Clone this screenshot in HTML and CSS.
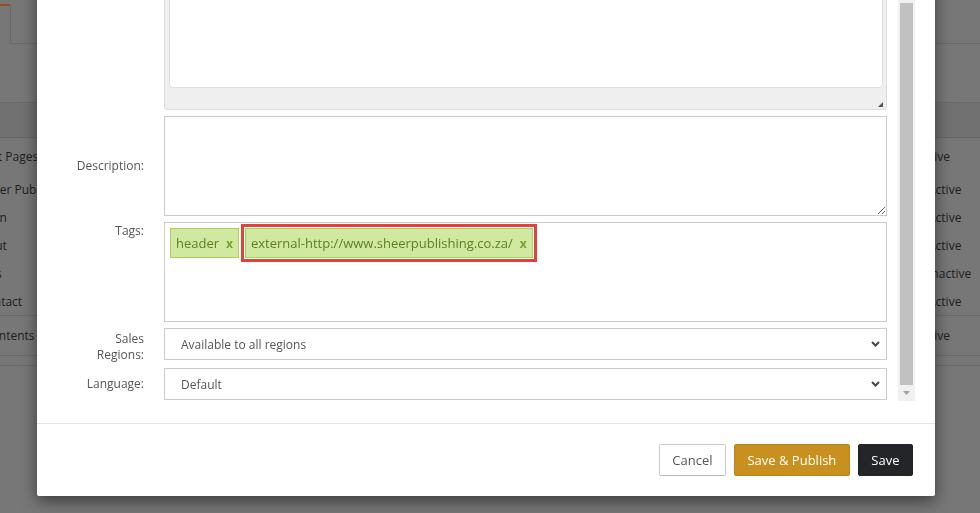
FILE: index.html
```html
<!DOCTYPE html>
<html lang="en">
<head>
<meta charset="utf-8">
<title>Edit Page</title>
<link rel="stylesheet" href="styles.css">
</head>
<body>
<div class="page">
  <div class="tabbar">
    <div class="tab-active"></div>
    <div class="tab"></div>
  </div>
  <div class="table">
    <div class="thead"></div>
    <div class="trow first"><span class="name deep">Root Pages</span><span class="status">Live</span></div>
    <div class="trow"><span class="name">Sheer Publishing</span><span class="status">Active</span></div>
    <div class="trow"><span class="name">Main</span><span class="status">Active</span></div>
    <div class="trow"><span class="name deeper">About</span><span class="status">Active</span></div>
    <div class="trow"><span class="name deeper">Links</span><span class="status">Inactive</span></div>
    <div class="trow"><span class="name">Contact</span><span class="status">Active</span></div>
    <div class="trow section"><span class="name short">Contents</span><span class="status">Live</span></div>
    <div class="rule"></div>
  </div>
</div>

<div class="modal">
  <div class="modal-body">
    <div class="form">
      <div class="form-row gap6">
        <div class="label"></div>
        <div class="field">
          <div class="editor">
            <div class="editor-area"></div>
            <div class="editor-status"><span class="grip"></span></div>
          </div>
        </div>
      </div>
      <div class="form-row gap6">
        <div class="label">Description:</div>
        <div class="field"><textarea class="textarea"></textarea></div>
      </div>
      <div class="form-row gap6 top">
        <div class="label label-top">Tags:</div>
        <div class="field">
          <div class="tags">
            <span class="tag">header<span class="x">x</span></span>
            <span class="tag flagged">external-http://www.sheerpublishing.co.za/<span class="x">x</span></span>
          </div>
        </div>
      </div>
      <div class="form-row gap8">
        <div class="label label-two">Sales Regions:</div>
        <div class="field">
          <div class="select"><span>Available to all regions</span><svg class="chev" width="9" height="6" viewBox="0 0 9 6"><path d="M1 1 L4.5 4.5 L8 1" fill="none" stroke="#444" stroke-width="2"/></svg></div>
        </div>
      </div>
      <div class="form-row">
        <div class="label">Language:</div>
        <div class="field">
          <div class="select"><span>Default</span><svg class="chev" width="9" height="6" viewBox="0 0 9 6"><path d="M1 1 L4.5 4.5 L8 1" fill="none" stroke="#444" stroke-width="2"/></svg></div>
        </div>
      </div>
    </div>
    <div class="scrollbar">
      <div class="track-space"></div>
      <div class="thumb"></div>
      <div class="arrow"><svg width="7" height="4" viewBox="0 0 7 4"><path d="M0 0 L7 0 L3.5 4 Z" fill="#a3a3a3"/></svg></div>
    </div>
  </div>
  <div class="modal-footer">
    <button class="btn btn-cancel">Cancel</button>
    <button class="btn btn-publish">Save &amp; Publish</button>
    <button class="btn btn-save">Save</button>
  </div>
</div>
</body>
</html>
```

FILE: styles.css
```css
* { box-sizing: border-box; }
html, body { margin: 0; padding: 0; }
body {
  background: #777777;
  font-family: "Open Sans", "DejaVu Sans", sans-serif;
  width: 980px;
  height: 513px;
  overflow: hidden;
}

/* background page (dimmed) */
.page { width: 980px; color: #1e1e1e; font-size: 12px; }
.tabbar {
  height: 44px;
  border-bottom: 1px solid #6a6a6a;
  display: flex;
}
.tab-active {
  width: 10px;
  margin-top: 4px;
  height: 40px;
  border-top: 2px solid #9c4a20;
  background: #777777;
}
.tab {
  width: 80px;
  margin-top: 5px;
  border-left: 1px solid #6a6a6a;
}
.table { margin-top: 58px; }
.thead {
  height: 36px;
  background: #717171;
  border-top: 1px solid #6a6a6a;
  border-bottom: 1px solid #666666;
}
.trow {
  display: grid;
  grid-template-columns: 1fr 52px;
  height: 28px;
  align-items: center;
  white-space: nowrap;
}
.trow.first { height: 37px; }
.trow.section {
  height: 41px;
  border-top: 1px solid #6a6a6a;
  border-bottom: 1px solid #6a6a6a;
}
.name { margin-left: -21px; }
.name.deep { margin-left: -24px; }
.name.deeper { margin-left: -27px; }
.name.short { margin-left: -16px; }
.status { overflow: hidden; }
.rule { margin-top: 9px; border-top: 1px solid #6a6a6a; }

/* modal */
.modal {
  position: fixed;
  left: 37px;
  width: 898px;
  top: -60px;
  bottom: 17px;
  background: #fff;
  border-radius: 2px;
  box-shadow: 0 5px 15px rgba(0,0,0,0.5);
  display: flex;
  flex-direction: column;
}
.modal-body {
  flex: 1;
  min-height: 0;
  display: flex;
  padding: 0 20px 22px 20px;
}
.form {
  flex: 1;
  min-width: 0;
  overflow: hidden;
  display: flex;
  flex-direction: column;
  justify-content: flex-end;
  padding: 0 11px 1px 15px;
}
.form-row {
  display: flex;
  align-items: center;
  gap: 20px;
  flex-shrink: 0;
}
.form-row.top { align-items: flex-start; }
.gap6 { margin-bottom: 6px; }
.gap8 { margin-bottom: 8px; }
.label {
  width: 72px;
  flex: none;
  text-align: right;
  font-size: 12px;
  line-height: 16px;
  color: #555;
}
.label-top { line-height: 17px; }
.label-two { padding-top: 3px; margin-bottom: -3px; }
.field { flex: 1; min-width: 0; }

.editor {
  height: 320px;
  border: 1px solid #dddddd;
  border-radius: 3px;
  background: #efefef;
  display: flex;
  flex-direction: column;
  padding: 4px 3px 0 4px;
}
.editor-area {
  flex: 1;
  background: #fff;
  border: 1px solid #dddddd;
  border-radius: 4px;
}
.editor-status {
  height: 21px;
  display: flex;
  justify-content: flex-end;
  align-items: flex-end;
  padding-bottom: 2px;
}
.grip {
  width: 0;
  height: 0;
  border-left: 5px solid transparent;
  border-bottom: 5px solid #555;
}

.textarea {
  display: block;
  width: 100%;
  height: 100px;
  border: 1px solid #cccccc;
  border-radius: 0;
  resize: vertical;
  font-family: inherit;
  margin: 0;
}

.tags {
  height: 100px;
  border: 1px solid #cccccc;
  padding: 5px;
  display: flex;
  align-items: flex-start;
  gap: 6px;
}
.tag {
  display: inline-flex;
  align-items: center;
  height: 30px;
  padding: 0 5px;
  border: 1px solid #a9d25c;
  background: #d0e8a0;
  color: #5d7f22;
  font-size: 13px;
  white-space: nowrap;
}
.tag .x {
  margin-left: 7px;
  font-weight: bold;
  font-size: 12px;
  color: #76a32b;
}
.tag.flagged {
  outline: 3px solid #e5413c;
  outline-offset: 1px;
}

.select {
  height: 32px;
  border: 1px solid #cccccc;
  display: flex;
  align-items: center;
  justify-content: space-between;
  padding: 0 6px 0 16px;
  font-size: 12px;
  color: #555;
}
.chev { display: block; }

.scrollbar {
  width: 17px;
  flex: none;
  background: #f1f1f1;
  display: flex;
  flex-direction: column;
}
.track-space { flex: 1; }
.thumb {
  height: 382px;
  margin: 0 2px;
  background: #c1c1c1;
}
.arrow {
  height: 16px;
  display: flex;
  align-items: center;
  justify-content: center;
}

.modal-footer {
  border-top: 1px solid #e5e5e5;
  padding: 20px 22px 20px;
  display: flex;
  justify-content: flex-end;
  gap: 8px;
}
.btn {
  height: 32px;
  padding: 0 12.5px;
  border: 1px solid;
  border-radius: 2px;
  font-family: "Open Sans", sans-serif;
  font-size: 13px;
  cursor: pointer;
}
.btn-cancel {
  background: #fff;
  border-color: #cccccc;
  border-bottom-color: #bbbbbb;
  color: #555;
}
.btn-publish {
  background: #c8911f;
  border-color: #b6841b;
  color: #fff;
}
.btn-save {
  background: #242528;
  border-color: #242528;
  color: #fff;
}
```
